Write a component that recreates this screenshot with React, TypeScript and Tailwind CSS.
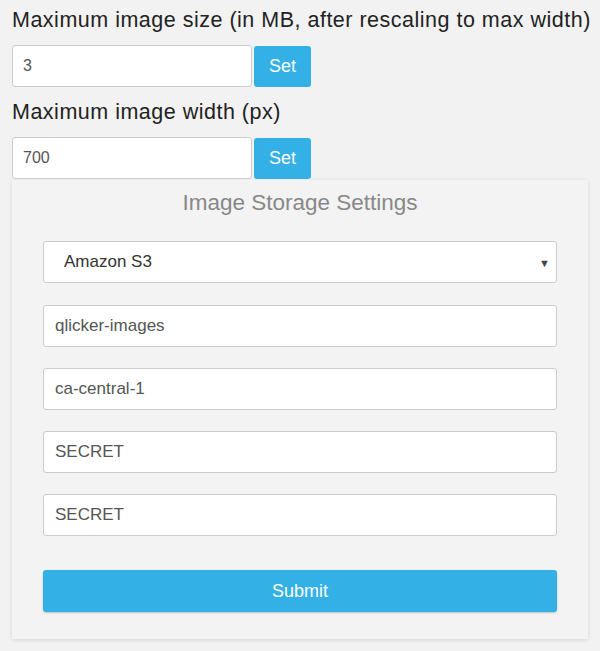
const font = { fontFamily: '"Liberation Sans", Arial, sans-serif' };

const SetRow = ({ value }: { value: string }) => (
  <div className="flex items-stretch gap-[2px]">
    <input
      readOnly
      value={value}
      className="w-[240px] h-[42px] bg-white border border-[#ccc] rounded-[3px] px-[10px] text-[16px] text-[#555] outline-none"
    />
    <button className="w-[57px] h-[41px] mt-[1px] bg-[#33b0e6] text-white text-[18px] rounded-[3px]">Set</button>
  </div>
);

const Field = ({ value }: { value: string }) => (
  <input
    readOnly
    value={value}
    className="w-full h-[42px] bg-white border border-[#ccc] rounded-[3px] px-[11px] text-[17px] text-[#555] outline-none"
  />
);

function App() {
  return (
    <div style={font} className="w-[600px] h-[651px] bg-[#f2f2f2] px-[12px] pt-[5px] overflow-hidden">
      <div className="text-[21.5px] leading-[30px] tracking-[0.5px] text-[#222] whitespace-nowrap">
        Maximum image size (in MB, after rescaling to max width)
      </div>
      <div className="mt-[10px]">
        <SetRow value="3" />
      </div>
      <div className="mt-[10px] text-[21.5px] leading-[30px] tracking-[0.5px] text-[#222]">Maximum image width (px)</div>
      <div className="mt-[10px]">
        <SetRow value="700" />
      </div>
      <div className="mt-[1px] w-[576px] h-[459px] bg-[#f3f3f3] shadow-[0_1px_4px_rgba(0,0,0,0.12)] px-[31px] pt-[10px]">
        <div className="text-center text-[22.5px] leading-[26px] text-[#888]">Image Storage Settings</div>
        <div className="mt-[25px] relative h-[42px] bg-white border border-[#ccc] rounded-[3px] flex items-center pl-[20px] text-[17px] text-[#333]">
          Amazon S3
          <span className="absolute right-[6px] top-[13px] text-[11px] text-[#444]">▼</span>
        </div>
        <div className="mt-[22px] flex flex-col gap-[21px]">
          <Field value="qlicker-images" />
          <Field value="ca-central-1" />
          <Field value="SECRET" />
          <Field value="SECRET" />
        </div>
        <button className="mt-[34px] w-full h-[42px] bg-[#33b0e6] text-white text-[18px] rounded-[3px] shadow-[0_1px_2px_rgba(0,0,0,0.2)]">
          Submit
        </button>
      </div>
    </div>
  );
}

export default App;
